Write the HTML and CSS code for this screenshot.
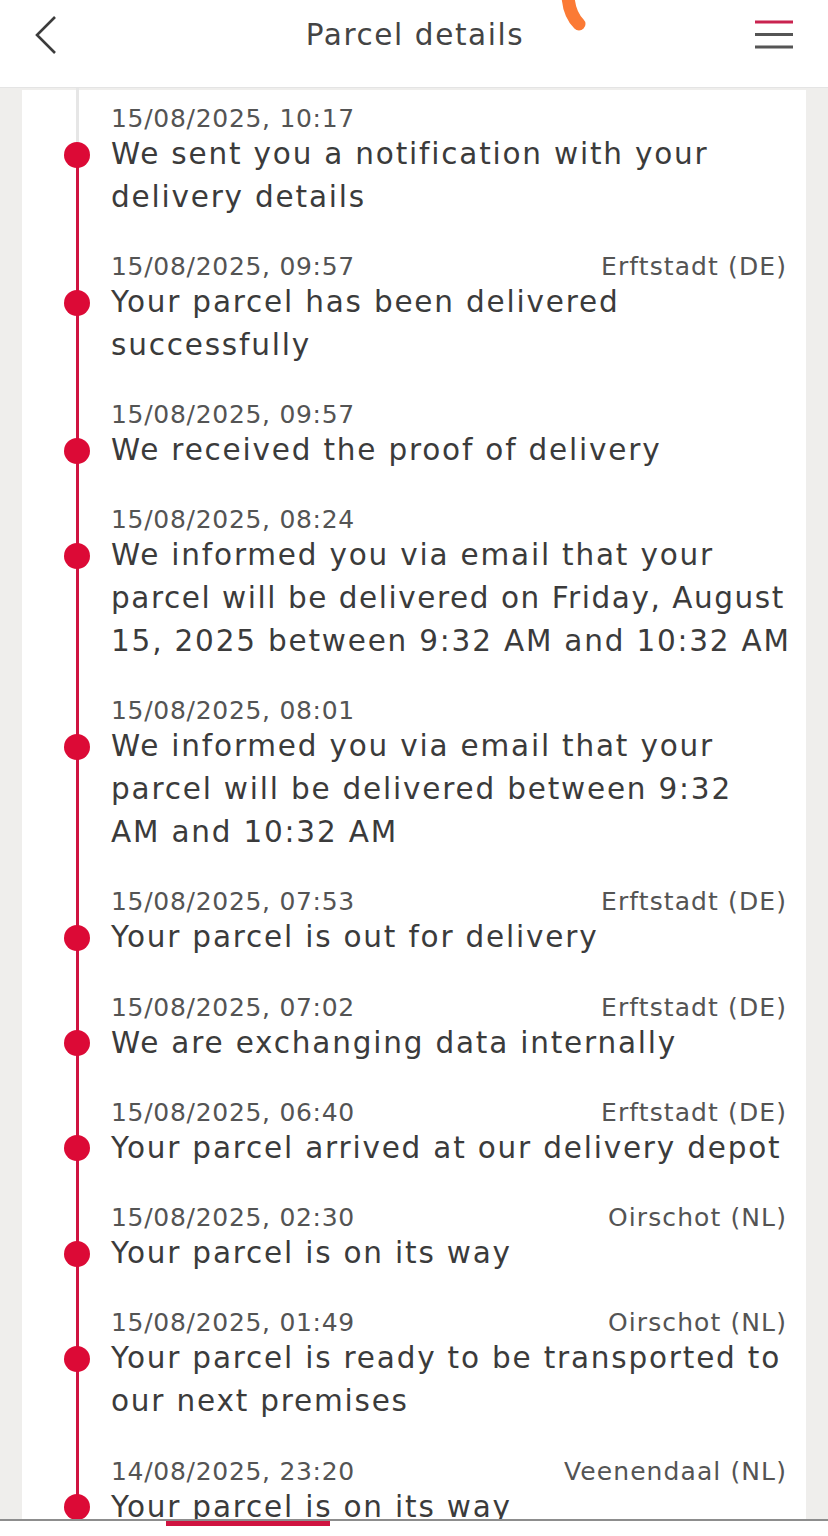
FILE: index.html
```html
<!DOCTYPE html>
<html>
<head>
  <title>Parcel details</title>
  <link rel="stylesheet" href="styles.css">
</head>
<body>
  <div class="screen">
    <header class="topbar">
      <svg class="back" width="22" height="40" viewBox="0 0 22 40">
        <polyline points="20,2 2,20 20,38" fill="none" stroke="#3c3c3c" stroke-width="2.6"/>
      </svg>
      <h1>Parcel details</h1>
      <svg class="scribble" width="40" height="36" viewBox="0 0 40 36">
        <path d="M8 -4 Q9 14 19 24" fill="none" stroke="#fb7a35" stroke-width="13" stroke-linecap="round"/>
      </svg>
      <svg class="menu" width="38" height="30" viewBox="0 0 38 30">
        <line x1="0" y1="2" x2="38" y2="2" stroke="#c9234f" stroke-width="3"/>
        <line x1="0" y1="14.5" x2="38" y2="14.5" stroke="#555" stroke-width="3"/>
        <line x1="0" y1="27" x2="38" y2="27" stroke="#555" stroke-width="3"/>
      </svg>
    </header>

    <main class="content">
      <div class="card">
        <ul class="timeline">
          <li class="event">
            <div class="meta"><span>15/08/2025, 10:17</span></div>
            <div class="title">We sent you a notification with your<br>delivery details</div>
          </li>
          <li class="event">
            <div class="meta"><span>15/08/2025, 09:57</span><span class="place">Erftstadt (DE)</span></div>
            <div class="title">Your parcel has been delivered<br>successfully</div>
          </li>
          <li class="event">
            <div class="meta"><span>15/08/2025, 09:57</span></div>
            <div class="title">We received the proof of delivery</div>
          </li>
          <li class="event">
            <div class="meta"><span>15/08/2025, 08:24</span></div>
            <div class="title">We informed you via email that your<br><span class="tight">parcel will be delivered on Friday, August</span><br>15, 2025 between 9:32 AM and 10:32 AM</div>
          </li>
          <li class="event">
            <div class="meta"><span>15/08/2025, 08:01</span></div>
            <div class="title">We informed you via email that your<br>parcel will be delivered between 9:32<br>AM and 10:32 AM</div>
          </li>
          <li class="event">
            <div class="meta"><span>15/08/2025, 07:53</span><span class="place">Erftstadt (DE)</span></div>
            <div class="title">Your parcel is out for delivery</div>
          </li>
          <li class="event">
            <div class="meta"><span>15/08/2025, 07:02</span><span class="place">Erftstadt (DE)</span></div>
            <div class="title">We are exchanging data internally</div>
          </li>
          <li class="event">
            <div class="meta"><span>15/08/2025, 06:40</span><span class="place">Erftstadt (DE)</span></div>
            <div class="title">Your parcel arrived at our delivery depot</div>
          </li>
          <li class="event">
            <div class="meta"><span>15/08/2025, 02:30</span><span class="place">Oirschot (NL)</span></div>
            <div class="title">Your parcel is on its way</div>
          </li>
          <li class="event">
            <div class="meta"><span>15/08/2025, 01:49</span><span class="place">Oirschot (NL)</span></div>
            <div class="title">Your parcel is ready to be transported to<br>our next premises</div>
          </li>
          <li class="event">
            <div class="meta"><span>14/08/2025, 23:20</span><span class="place">Veenendaal (NL)</span></div>
            <div class="title">Your parcel is on its way</div>
          </li>
        </ul>
      </div>
    </main>

    <nav class="tabbar">
      <div class="tab-indicator"></div>
    </nav>
  </div>
</body>
</html>
```

FILE: styles.css
```css
body {
  margin: 0;
  background-color: #efeeec;
  font-family: "DejaVu Sans", "Noto Sans", sans-serif;
  color: #3d3d3d;
}
.screen {
  height: 1536px;
  display: flex;
  flex-direction: column;
  overflow: hidden;
}
.topbar {
  position: relative;
  height: 88px;
  flex: none;
  background-color: #ffffff;
  border-bottom: 1px solid #e4e4e4;
  display: flex;
  align-items: center;
  justify-content: space-between;
  padding: 0 35px 18px 35px;
  box-sizing: border-box;
}
.topbar h1 {
  margin: 0 0 0 18px;
  font-weight: 400;
  font-size: 29.5px;
  letter-spacing: 1.6px;
  color: #444;
}
.scribble {
  position: absolute;
  left: 560px;
  top: 0;
}
.content {
  flex: 1;
  overflow: hidden;
  padding-top: 2px;
}
.card {
  margin: 0 22px;
  background-color: #ffffff;
  height: 100%;
}
.timeline {
  list-style: none;
  margin: 0;
  padding: 14px 19px 0 89px;
}
.event {
  position: relative;
  padding-bottom: 33.5px;
}
.event::before {
  content: "";
  position: absolute;
  left: -35.5px;
  top: 0;
  bottom: 0;
  width: 3px;
  background-color: #cf1340;
}
.event:first-child::before {
  top: -16px;
  background: linear-gradient(#e6e6e6 0, #e6e6e6 66px, #cf1340 66px);
}
.event::after {
  content: "";
  position: absolute;
  left: -47px;
  top: 37.5px;
  width: 26px;
  height: 26px;
  border-radius: 50%;
  background-color: #dc0a36;
}
.meta {
  display: flex;
  justify-content: space-between;
  font-size: 25px;
  line-height: 29px;
  letter-spacing: 0.7px;
  color: #545454;
}
.place {
  letter-spacing: 1.1px;
}
.title {
  font-size: 29.5px;
  line-height: 42.8px;
  letter-spacing: 1.8px;
  white-space: nowrap;
  color: #3b3b3b;
}
.tight {
  letter-spacing: 1.55px;
}
.tabbar {
  flex: none;
  height: 15px;
  background-color: #ffffff;
  border-top: 2px solid #8d8d8d;
}
.tab-indicator {
  width: 164px;
  height: 5px;
  margin-left: 166px;
  background-color: #cf1340;
}
```
